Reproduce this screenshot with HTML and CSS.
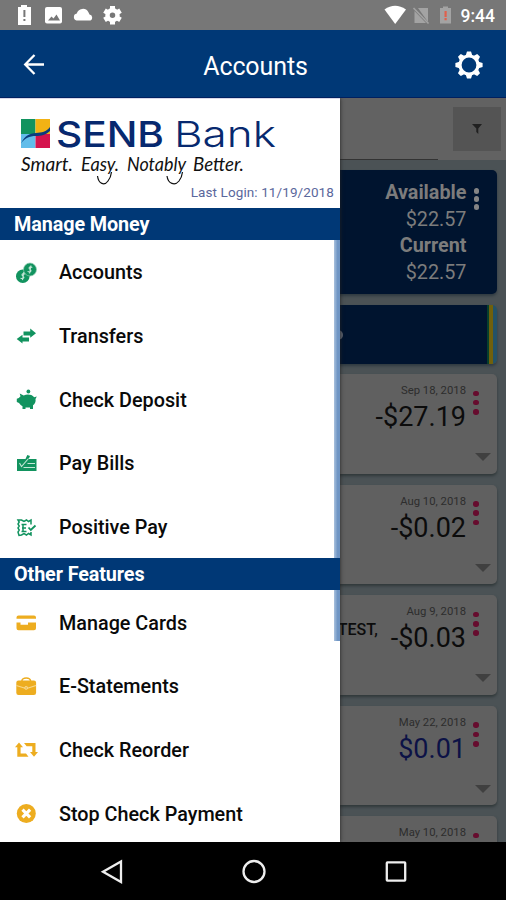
FILE: index.html
```html
<!DOCTYPE html>
<html lang="en">
<head>
<meta charset="utf-8">
<title>Accounts</title>
<link rel="stylesheet" href="styles.css">
</head>
<body>
<div class="phone">
  <div class="status">
    <svg class="status-left" width="130" height="30" viewBox="0 0 130 30">
      <path fill="#fff" d="M18 7h3V5h6v2h4v18H18z"/>
      <path fill="#777" d="M23.400 10h2v7h-2zM23.400 19h2v2h-2z"/>
      <rect x="45" y="7" width="17" height="16.500" rx="2" fill="#fff"/>
      <path fill="#777" d="M48 20.500l3.500-4 2 2 3-4 3.500 6z"/>
      <path fill="#fff" d="M76.500 20.500a3.600 3.600 0 0 1 .3-7 6.300 6.300 0 0 1 11.500-1.500l1.200 2.500a3.200 3.200 0 0 1 1 6z"/>
      <circle cx="112.500" cy="15.200" r="5" fill="none" stroke="#fff" stroke-width="4.500"/>
      <path stroke="#fff" stroke-width="5" d="M112.500 6v3M112.500 21.500v3M104.500 10.600l2.500 1.500M118 18.300l2.500 1.500M104.500 19.800l2.500-1.500M118 12.100l2.500-1.500"/>
    </svg>
    <div class="status-right">
      <svg width="72" height="30" viewBox="0 0 72 30">
        <path fill="#fff" d="M1.500 9.500Q12 2 23 9.500L12.200 24z"/>
        <path fill="#a3a3a3" d="M35 8h10v14zM31.500 11l11.500 12H31.500z"/>
        <path stroke="#a3a3a3" stroke-width="1.600" d="M30.500 8l15 15.500"/>
        <path fill="#a3a3a3" d="M57 8h3V6.500h5V8h3v15.500H57z"/>
        <path fill="#e0604c" d="M61.500 11h2.200v6h-2.200zM61.500 18h2.200v2.200h-2.200z"/>
      </svg>
      <span class="clock">9:44</span>
    </div>
  </div>
  <header class="appbar">
    <svg width="22" height="22" viewBox="0 0 22 22" fill="none" stroke="#fff" stroke-width="2.300"><path d="M21 10.500H2.500M11.500 1l-9.300 9.500 9.300 9.500"/></svg>
    <h1>Accounts</h1>
    <svg width="28" height="28" viewBox="-14 -14 28 28">
      <circle r="9" fill="none" stroke="#fff" stroke-width="3.200"/>
      <g fill="#fff"><path id="tooth" d="M-3.300-9.500L-2-13.600H2L3.300-9.500z"/>
      <use href="#tooth" transform="rotate(45)"/><use href="#tooth" transform="rotate(90)"/><use href="#tooth" transform="rotate(135)"/><use href="#tooth" transform="rotate(180)"/><use href="#tooth" transform="rotate(225)"/><use href="#tooth" transform="rotate(270)"/><use href="#tooth" transform="rotate(315)"/></g>
    </svg>
  </header>
  <main class="stage">
    <div class="content">
      <div class="search">
        <div class="field"></div>
        <div class="filter"><svg width="10" height="11" viewBox="0 0 10 11"><path fill="#202020" d="M0 0h10L6.300 4.500V10L4.300 8V4.500z"/></svg></div>
      </div>
      <section class="balance">
        <div class="amounts"><b>Available</b><span>$22.57</span><b>Current</b><span>$22.57</span></div>
        <div class="dots"><i></i><i></i><i></i></div>
      </section>
      <section class="banner"><span class="pager"></span></section>
      <div class="list">
        <article class="txn"><p class="date">Sep 18, 2018</p><p class="amt"><span>-$27.19</span></p><div class="dots"><i></i><i></i><i></i></div><div class="caret"></div></article>
        <article class="txn"><p class="date">Aug 10, 2018</p><p class="amt"><span>-$0.02</span></p><div class="dots"><i></i><i></i><i></i></div><div class="caret"></div></article>
        <article class="txn"><p class="date">Aug 9, 2018</p><p class="amt"><b>TEST,</b><span>-$0.03</span></p><div class="dots"><i></i><i></i><i></i></div><div class="caret"></div></article>
        <article class="txn"><p class="date">May 22, 2018</p><p class="amt credit"><span>$0.01</span></p><div class="dots"><i></i><i></i><i></i></div><div class="caret"></div></article>
        <article class="txn"><p class="date">May 10, 2018</p><p class="amt"></p><div class="dots"><i></i><i></i><i></i></div><div class="caret"></div></article>
      </div>
    </div>
    <nav class="drawer">
      <div class="brand">
        <svg width="340" height="84" viewBox="0 99 340 84">
          <path fill="#12935f" d="M21 119h14.500v15H21z"/><path fill="#f2b214" d="M35.500 119H50v15H35.500z"/>
          <path fill="#62bdea" d="M21 134h14.500v14H21z"/><path fill="#d5134d" d="M35.500 134H50v14H35.500z"/>
          <path fill="#0b3c7d" d="M21 143.500c4-8 8-10 15-10.500 6-.4 10-1 14-6v4c-4 4-9 5-14 5-7 0-11 2-15 7.500z"/>
          <text class="logo-bold" x="56" y="147" textLength="108" lengthAdjust="spacingAndGlyphs">SENB</text>
          <text class="logo-light" x="174" y="147" textLength="102" lengthAdjust="spacingAndGlyphs">Bank</text>
          <g class="tagline">
            <text x="21" y="171" textLength="52" lengthAdjust="spacingAndGlyphs">Smart.</text>
            <text x="81" y="171" textLength="38" lengthAdjust="spacingAndGlyphs">Easy.</text>
            <text x="127" y="171" textLength="59" lengthAdjust="spacingAndGlyphs">Notably</text>
            <text x="193" y="171" textLength="51" lengthAdjust="spacingAndGlyphs">Better.</text>
          </g>
          <path fill="none" stroke="#111" stroke-width="1.200" d="M97.500 176c1 8 7 10 10.500 5q3-4 3.500-9M167 176c1 8 8 10 12 5q3-4 3.500-9"/>
        </svg>
        <p class="login">Last Login: 11/19/2018</p>
      </div>
      <h2>Manage Money</h2>
      <ul>
        <li><svg viewBox="0 0 22 22"><circle cx="6.800" cy="14.200" r="6.800" fill="#12935f"/><circle cx="14" cy="7.500" r="6.500" fill="#12935f" stroke="#8fcbb0" stroke-width=".7"/><g fill="none" stroke="#c5e6d7" stroke-width="1.100"><path d="M16.300 5.500c-2.800-1.600-4.300.5-2.200 1.900s0 3.500-2.500 2M14.900 3.500l-1.300 8M9.200 12.200c-2.800-1.600-4.300.5-2.200 1.900s0 3.500-2.500 2M7.800 10.200l-1.300 8"/></g></svg>Accounts</li>
        <li><svg viewBox="0 0 22 22"><path fill="#12935f" d="M7.500 5.500h6.700V2.500L20 7.200l-5.800 4.500V9.500H7.500zM13 11.500H6.500V8.800L.7 13l5.800 4.500V15.500H13z"/></svg>Transfers</li>
        <li><svg viewBox="0 0 22 22"><circle cx="12.400" cy="2.500" r="1.900" fill="#12935f"/><path fill="#12935f" d="M3.700 4.500l4 2C11 5 15.500 5.200 18.200 8.200l2.600-.8-1.300 2.600c.6 3-.8 5-2.500 6.300V20h-3v-1.600H9.500V20h-3v-2.800C4.800 16.500 3.800 15 3 14L.8 13V9.800l2-.8 1.700-1.700z"/></svg>Check Deposit</li>
        <li><svg viewBox="0 0 22 22"><path fill="#12935f" d="M1 6h8.500l1.800-4 2.700 1-1.300 3H20.500V18H1z"/><path fill="none" stroke="#c5e6d7" stroke-width="1.100" d="M3.500 10l2 3.500 7-8M11.500 10.500h7.500M7.500 14.500h11.500"/></svg>Pay Bills</li>
        <li><svg viewBox="0 0 22 22" fill="none" stroke="#12935f" stroke-width="1.500"><path d="M15 7.500V3L12.500 4.500l-2-1.500-2.500 1.500L5.500 3 2 3l1.200 2-1.200 2 1.200 2-1.200 2 1.200 2-1.200 2 1 3.500 2.500-.5L8 16.500l2.500 1.500 2-1.500L15 18v-3M5.500 7.500h5M6 11h4M5.500 14.500h5M7 7v7"/><path stroke-width="1.800" d="M12.500 10.500l2.300 2.500 4.700-4.500"/></svg>Positive Pay</li>
      </ul>
      <h2>Other Features</h2>
      <ul>
        <li><svg viewBox="0 0 22 22"><path fill="#edad20" d="M.5 5.500a2 2 0 0 1 2-2H18a2 2 0 0 1 2 2v1.300H.5zM.5 10.500H4.500v2.200h7.500v-2.200h8v5.800a2 2 0 0 1-2 2H2.500a2 2 0 0 1-2-2z"/></svg>Manage Cards</li>
        <li><svg viewBox="0 0 22 22"><rect x=".3" y="4.500" width="19.800" height="14.500" rx="2.200" fill="#edad20"/><path fill="none" stroke="#edad20" stroke-width="1.500" d="M5.800 5C6.500 1 14 1 14.600 5"/><path fill="none" stroke="#f8d88e" stroke-width="1.100" d="M.3 9.500l8 2.500h4L20 9.500"/><circle cx="10.200" cy="11.900" r="1.500" fill="none" stroke="#f8d88e"/></svg>E-Statements</li>
        <li><svg viewBox="0 0 22 22"><path fill="#edad20" d="M3 2.500L7 7.300H4.600v6.200H10l2.500 3.200H1.300V7.300H-1zM8 3h11.500v9H22L18 16.700 14 12h2.300V6.200h-5.700z"/></svg>Check Reorder</li>
        <li><svg viewBox="0 0 22 22"><circle cx="10.300" cy="10.500" r="9.500" fill="#edad20"/><path stroke="#fff" stroke-width="3.200" d="M6.500 6.700l7.600 7.600M14.100 6.700l-7.600 7.600"/></svg>Stop Check Payment</li>
      </ul>
      <div class="thumb"></div>
    </nav>
  </main>
  <footer class="sysnav">
    <svg width="24" height="26" viewBox="0 0 24 26"><path d="M21 2.500v20.500L3 12.700z"/></svg>
    <svg width="24" height="26" viewBox="0 0 24 26"><circle cx="12" cy="12.500" r="10.500"/></svg>
    <svg width="24" height="26" viewBox="0 0 24 26"><rect x="2.800" y="3.300" width="18.400" height="18.400" rx=".6"/></svg>
  </footer>
</div>
</body>
</html>
```

FILE: styles.css
```css
* { box-sizing: border-box; margin: 0; padding: 0; }
body { font-family: Roboto, "Liberation Sans", sans-serif; background: #000; }
svg { display: block; flex: none; overflow: visible; }
.phone { width: 506px; height: 900px; display: grid; grid-template-rows: 30px 68px 744px 58px; overflow: hidden; }

.status { background: #777; display: flex; justify-content: space-between; }
.status-right { display: flex; align-items: center; gap: 6px; padding-right: 11px; }
.clock { color: #fff; font-size: 17.500px; font-weight: 500; line-height: 30px; padding-top: 2px; }

.appbar { background: #003876; border-bottom: 1px solid #002060; display: grid; grid-template-columns: 46px 1fr 28px; align-items: center; padding: 2px 23px 0 23px; }
.appbar h1 { color: #fff; font-size: 25px; font-weight: 400; text-align: center; padding-right: 13px; padding-top: 3px; letter-spacing: -.1px; }

.stage { position: relative; background: #4b5255; overflow: hidden; }
.content { height: 100%; }
.search { height: 62px; background: #626262; display: flex; justify-content: space-between; padding: 9px 5px 0 330px; }
.field { width: 108px; height: 53px; border-bottom: 1px solid #333; }
.filter { width: 48px; height: 44px; background: #545454; display: flex; align-items: center; justify-content: center; }

.balance { height: 124px; margin: 10px 9px 0 9px; background: #00142f; border-radius: 5px; box-shadow: 0 2px 3px #2f3a42; display: flex; justify-content: flex-end; gap: 7px; padding: 10px 18px 0 0; color: #7c7c7c; }
.amounts { display: flex; flex-direction: column; align-items: flex-end; font-size: 19.800px; line-height: 26.600px; }
.dots { display: flex; flex-direction: column; gap: 3.900px; }
.dots i { width: 5.500px; height: 5.500px; border-radius: 50%; background: #660c2e; }
.balance .dots { padding-top: 8px; gap: 2.500px; }
.balance .dots i { background: #858585; }

.banner { height: 59px; margin: 11px 9px 0 9px; border-radius: 5px; box-shadow: 0 2px 3px #2f3a42; background: linear-gradient(to right, #00142f 0 478px, #073f2c 478px 480px, #70600c 480px 484px, #245267 484px); padding: 25px 0 0 324px; }
.pager { display: block; width: 10px; height: 10px; border-radius: 50%; background: #5b626e; }

.list { padding: 10px 9px 0 9px; display: grid; grid-auto-rows: 99.600px; gap: 11px; }
.txn { background: #606060; border-radius: 5px; box-shadow: 0 2px 3px #30383a; display: grid; grid-template-columns: 1fr 11px; grid-template-rows: 27px 32px 1fr; column-gap: 4px; padding-right: 16px; color: #0c0c0c; }
.txn .date { grid-area: 1 / 1; text-align: right; font-size: 11.300px; font-weight: 400; line-height: 16px; padding-top: 9px; color: #2d2d2d; }
.txn .amt { grid-area: 2 / 1; display: flex; justify-content: flex-end; align-items: flex-start; gap: 13px; font-size: 27px; line-height: 33px; }
.txn .amt b { font-size: 16px; font-weight: 500; line-height: 16px; }
.txn .credit { color: #0c1246; }
.txn .dots { grid-area: 1 / 2 / 3 / 3; padding: 16.500px 0 0 3px; }
.caret { grid-area: 3 / 1 / 4 / 3; justify-self: end; margin: 20px -10px 0 0; border: 8px solid transparent; border-top-color: #404040; border-bottom: 0; height: 8px; }

.drawer { position: absolute; inset: 0 auto 0 0; width: 340px; background: #fff; border-top: 1px solid #d8d8e8; box-shadow: 0 0 4px #222; overflow: hidden; }
.brand { height: 109px; }
.logo-bold { font: 500 36px Inter, sans-serif; fill: #07296f; }
.logo-light { font: 300 36px Inter, sans-serif; fill: #07296f; }
.tagline { font: italic 400 19.500px Lato, sans-serif; fill: #111; }
.login { text-align: right; padding-right: 6px; font-size: 13.500px; line-height: 18px; color: #5a679c; letter-spacing: .1px; }
.drawer h2 { position: relative; z-index: 1; height: 32px; background: #003876; color: #fff; font-size: 19.800px; line-height: 34px; font-weight: 700; padding-left: 14px; letter-spacing: -.1px; }
.drawer li { list-style: none; height: 63.700px; display: flex; align-items: center; gap: 21px; padding: 2px 0 0 16px; font-size: 19.800px; font-weight: 500; color: #0a0a0a; }
.drawer li svg { width: 22px; height: 22px; }
.thumb { position: absolute; right: 0; top: 141px; width: 6px; height: 401px; background: linear-gradient(to right, #a9c1dd, #6f95c4 60%); }

.sysnav { background: #000; display: flex; justify-content: center; align-items: center; gap: 118px; padding: 1px 0 0 2px; }
.sysnav svg { fill: none; stroke: #eee; stroke-width: 2.300; }
```
